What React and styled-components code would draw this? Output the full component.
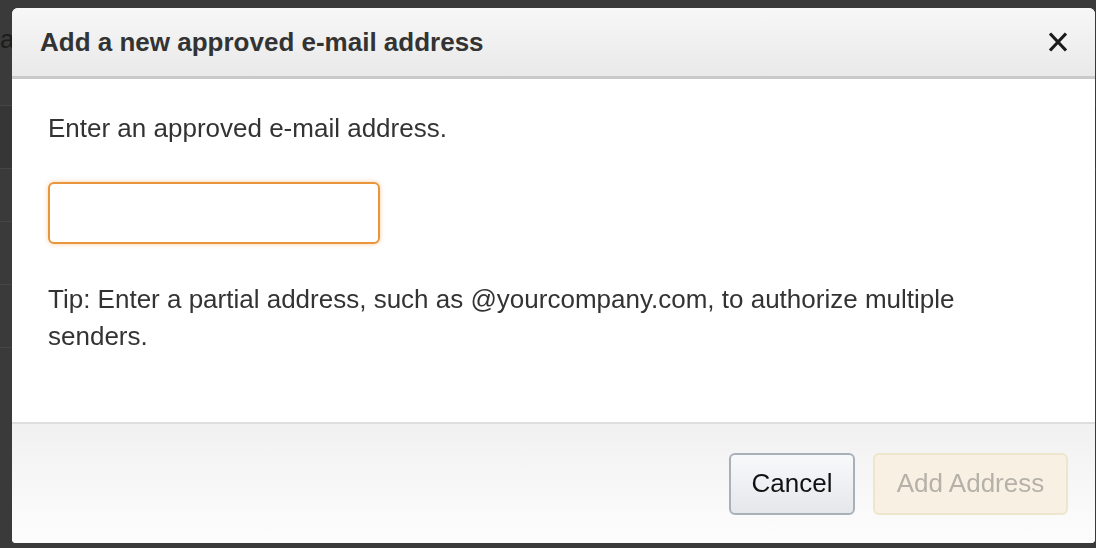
import React from "react";
import styled, { createGlobalStyle } from "styled-components";

const GlobalStyle = createGlobalStyle`
  html, body {
    margin: 0;
    padding: 0;
    height: 100%;
    background: #3a3a3a;
    font-family: "Liberation Sans", Arial, Helvetica, sans-serif;
  }
  #root {
    height: 100%;
  }
`;

const Page = styled.div`
  height: 548px;
  overflow: hidden;
  background: #3a3a3a;
`;

const PageTitle = styled.div`
  height: 106px;
  box-sizing: border-box;
  padding-top: 24px;
  font-size: 26px;
  color: #1c1c1c;
  border-bottom: 1px solid #454545;
`;

const PageRow = styled.div`
  height: ${({ $h }) => $h}px;
  box-sizing: border-box;
  border-bottom: 1px solid #454545;
  background: ${({ $dark }) => ($dark ? "#363636" : "transparent")};
`;

const Overlay = styled.div`
  position: fixed;
  inset: 0;
  display: flex;
  padding: 8px 1px 5px 12px;
  box-sizing: border-box;
`;

const Modal = styled.div`
  flex: 1;
  display: flex;
  flex-direction: column;
  background: #fff;
  border-radius: 6px 6px 4px 4px;
  overflow: hidden;
  color: #333;
`;

const Header = styled.div`
  height: 71px;
  flex-shrink: 0;
  display: flex;
  align-items: center;
  justify-content: space-between;
  padding: 0 24px 0 28px;
  box-sizing: border-box;
  background: linear-gradient(#f7f7f7, #e9e9e9);
  border-bottom: 3px solid #c9c9c9;
`;

const Title = styled.h1`
  margin: 0;
  font-size: 26px;
  font-weight: bold;
  color: #333;
`;

const Close = styled.button`
  width: 26px;
  height: 26px;
  padding: 0;
  border: 0;
  background: none;
  display: flex;
  align-items: center;
  justify-content: center;
  cursor: pointer;
`;

const Body = styled.div`
  flex: 1;
  padding: 31px 36px 0;
  font-size: 26px;
  line-height: 37px;
`;

const Text = styled.p`
  margin: 0;
`;

const Input = styled.input`
  display: block;
  width: 332px;
  height: 62px;
  box-sizing: border-box;
  margin: 35px 0 37px;
  border: 2px solid #e8953c;
  border-radius: 6px;
  box-shadow: 0 0 5px rgba(240, 150, 60, 0.45);
  outline: none;
  font: inherit;
  padding: 0 12px;
`;

const Footer = styled.div`
  height: 121px;
  flex-shrink: 0;
  box-sizing: border-box;
  display: flex;
  align-items: center;
  justify-content: flex-end;
  gap: 18px;
  padding: 0 27px 0 0;
  background: linear-gradient(#f1f1f1, #fdfdfd);
  border-top: 2px solid #dedede;
`;

const Button = styled.button`
  width: ${({ $w }) => $w}px;
  height: 62px;
  box-sizing: border-box;
  padding: 0;
  border-radius: 6px;
  font-family: "Liberation Sans", Arial, sans-serif;
  font-size: 26px;
  border: 2px solid ${({ $primary }) => ($primary ? "#efe5cd" : "#aab0b8")};
  background: ${({ $primary }) =>
    $primary ? "#f8f1e3" : "linear-gradient(#f8f9fb, #e5e7eb)"};
  color: ${({ $primary }) => ($primary ? "#b5b1a9" : "#111")};
`;

export default function App() {
  return (
    <>
      <GlobalStyle />
      <Page>
        <PageTitle>a</PageTitle>
        <PageRow $h={63} $dark />
        <PageRow $h={53} />
        <PageRow $h={63} />
        <PageRow $h={63} />
      </Page>
      <Overlay>
        <Modal>
          <Header>
            <Title>Add a new approved e-mail address</Title>
            <Close aria-label="Close">
              <svg width="22" height="20" viewBox="0 0 22 20">
                <path
                  d="M3 1.5 L19 18.5 M19 1.5 L3 18.5"
                  stroke="#1a1a1a"
                  strokeWidth="3.2"
                />
              </svg>
            </Close>
          </Header>
          <Body>
            <Text>Enter an approved e-mail address.</Text>
            <Input type="text" />
            <Text>
              Tip: Enter a partial address, such as @yourcompany.com, to
              authorize multiple senders.
            </Text>
          </Body>
          <Footer>
            <Button $w={126}>Cancel</Button>
            <Button $w={195} $primary disabled>
              Add Address
            </Button>
          </Footer>
        </Modal>
      </Overlay>
    </>
  );
}
